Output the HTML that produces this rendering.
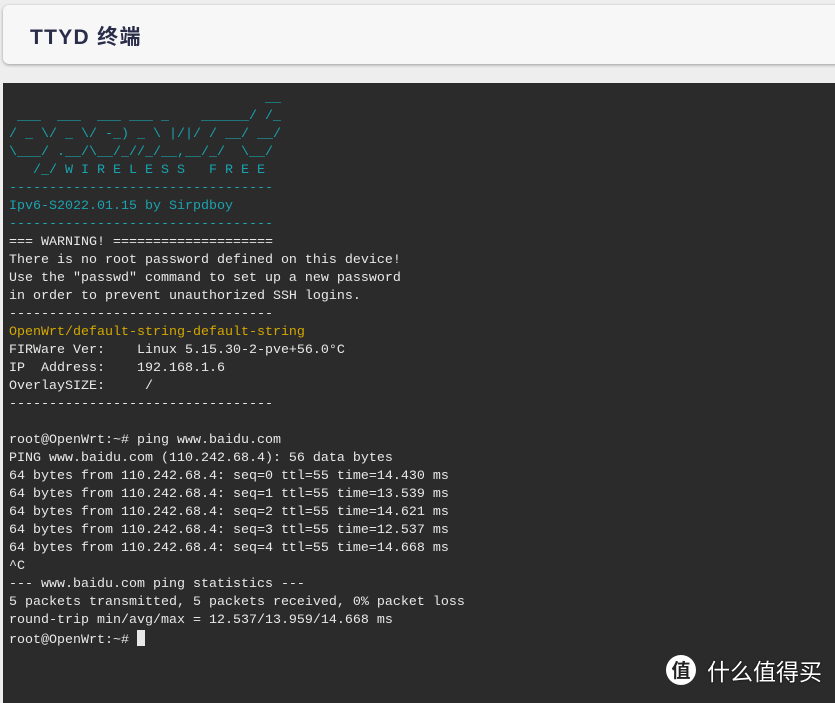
<!DOCTYPE html>
<html><head><meta charset="utf-8"><style>
body{margin:0;width:835px;height:696px;background:#eeeeee;overflow:hidden;position:relative;font-family:"Liberation Sans","Noto Sans CJK SC",sans-serif}
.hdr{position:absolute;left:3px;top:5px;width:840px;height:59px;background:#f7f7f7;border-radius:6px;box-shadow:0 1px 3px rgba(0,0,0,.35)}
.hdr h1{margin:0;position:absolute;left:27px;top:16px;font-size:21px;font-weight:bold;color:#2a2d4a;letter-spacing:1.3px}
.term{position:absolute;left:3px;top:83px;width:840px;height:620px;background:#2b2b2b}
pre{margin:0;position:absolute;left:6px;top:7px;font-family:"Liberation Mono",monospace;font-size:13.33px;line-height:18px;color:#e8e8e8}
.c{color:#1aa3b0}.y{color:#d4a800}
.cur{display:inline-block;width:8px;height:16px;background:#e8e8e8;vertical-align:-3px}
.wm{position:absolute;left:666px;top:653px;color:#fff;font-size:23px;font-family:"Noto Sans CJK SC",sans-serif;display:flex;align-items:center;text-shadow:0 0 2px #000}
.wm b{display:inline-block;width:30px;height:30px;border-radius:50%;background:#fff;color:#222;font-size:19px;text-align:center;line-height:30px;margin-right:11px;text-shadow:none}
</style></head><body>
<div class="hdr"><h1>TTYD 终端</h1></div>
<div class="term"><pre><span class="c">                                __
 ___  ___  ___ ___ _    ______/ /_
/ _ \/ _ \/ -_) _ \ |/|/ / __/ __/
\___/ .__/\__/_//_/__,__/_/  \__/
   /_/ W I R E L E S S   F R E E
---------------------------------
Ipv6-S2022.01.15 by Sirpdboy
---------------------------------</span>
=== WARNING! ====================
There is no root password defined on this device!
Use the "passwd" command to set up a new password
in order to prevent unauthorized SSH logins.
---------------------------------
<span class="y">OpenWrt/default-string-default-string</span>
FIRWare Ver:    Linux 5.15.30-2-pve+56.0°C
IP  Address:    192.168.1.6
OverlaySIZE:     /
---------------------------------

root@OpenWrt:~# ping www.baidu.com
PING www.baidu.com (110.242.68.4): 56 data bytes
64 bytes from 110.242.68.4: seq=0 ttl=55 time=14.430 ms
64 bytes from 110.242.68.4: seq=1 ttl=55 time=13.539 ms
64 bytes from 110.242.68.4: seq=2 ttl=55 time=14.621 ms
64 bytes from 110.242.68.4: seq=3 ttl=55 time=12.537 ms
64 bytes from 110.242.68.4: seq=4 ttl=55 time=14.668 ms
^C
--- www.baidu.com ping statistics ---
5 packets transmitted, 5 packets received, 0% packet loss
round-trip min/avg/max = 12.537/13.959/14.668 ms
root@OpenWrt:~# <span class="cur"></span></pre></div>
<div class="wm"><b>值</b>什么值得买</div>
</body></html>
